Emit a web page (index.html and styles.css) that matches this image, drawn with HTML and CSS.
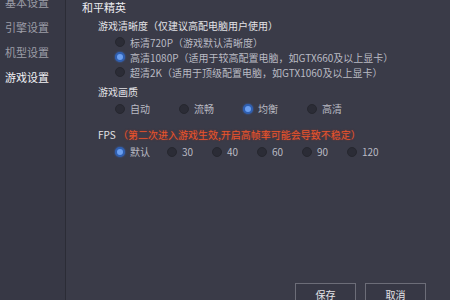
FILE: index.html
```html
<!DOCTYPE html>
<html lang="zh-CN">
<head>
    <meta charset="UTF-8">
    <meta name="viewport" content="width=device-width, initial-scale=1.0">
    <title>游戏设置</title>
    <link rel="stylesheet" href="styles.css">
</head>
<body>
    <div class="app">
        <!-- 左侧菜单 -->
        <div class="sidebar">
            <ul class="menu">
                <li>基本设置</li>
                <li>引擎设置</li>
                <li>机型设置</li>
                <li class="active">游戏设置</li>
            </ul>
        </div>

        <!-- 右侧内容 -->
        <div class="main">
            <div class="game-title">和平精英</div>

            <div class="group">
                <div class="group-label">游戏清晰度（仅建议高配电脑用户使用）</div>
                <div class="option-list">
                    <div class="option"><span class="radio"></span>标清720P（游戏默认清晰度）</div>
                    <div class="option"><span class="radio checked"></span>高清1080P（适用于较高配置电脑，如GTX660及以上显卡）</div>
                    <div class="option"><span class="radio"></span>超清2K（适用于顶级配置电脑，如GTX1060及以上显卡）</div>
                </div>
            </div>

            <div class="group">
                <div class="group-label">游戏画质</div>
                <div class="option-row">
                    <div class="option quality"><span class="radio"></span>自动</div>
                    <div class="option quality"><span class="radio"></span>流畅</div>
                    <div class="option quality"><span class="radio checked"></span>均衡</div>
                    <div class="option quality"><span class="radio"></span>高清</div>
                </div>
            </div>

            <div class="group fps">
                <div class="group-label">FPS <span class="warn">（第二次进入游戏生效,开启高帧率可能会导致不稳定）</span></div>
                <div class="option-row">
                    <div class="option fps-first"><span class="radio checked"></span>默认</div>
                    <div class="option fps-num"><span class="radio"></span>30</div>
                    <div class="option fps-num"><span class="radio"></span>40</div>
                    <div class="option fps-num"><span class="radio"></span>60</div>
                    <div class="option fps-num"><span class="radio"></span>90</div>
                    <div class="option fps-num"><span class="radio"></span>120</div>
                </div>
            </div>

            <div class="footer">
                <button class="btn">保存</button>
                <button class="btn">取消</button>
            </div>
        </div>
    </div>
</body>
</html>
```

FILE: styles.css
```css
/* Reset */
* {
    margin: 0;
    padding: 0;
    box-sizing: border-box;
}

body {
    font-family: "Noto Sans CJK SC", "Noto Sans", sans-serif;
    font-size: 10px;
    background-color: #3a3b48;
    color: #b9bac3;
    overflow: hidden;
}

.app {
    display: flex;
    height: 310px;
}

/* 左侧菜单 */
.sidebar {
    width: 66px;
    background-color: #373845;
    border-right: 1px solid #2b2c36;
    overflow: hidden;
}

.menu {
    list-style: none;
    margin-top: -10px;
}

.menu li {
    height: 25px;
    line-height: 25px;
    padding-left: 5px;
    font-size: 11px;
    color: #9c9da7;
}

.menu li.active {
    color: #f2f2f5;
}

/* 右侧内容 */
.main {
    flex: 1;
    display: flex;
    flex-direction: column;
    padding-left: 16px;
}

.game-title {
    line-height: 14px;
    font-size: 11px;
    color: #ececf0;
}

.group {
    padding-left: 16px;
    margin-top: 5px;
}

.group-label {
    line-height: 14px;
    color: #e2e2e6;
}

.warn {
    color: #e8552e;
    text-shadow: 0 0 2px rgba(200, 50, 20, 0.6);
}

.option-list {
    padding-left: 17px;
    margin-top: 1.5px;
}

.option {
    display: flex;
    align-items: center;
    line-height: 15px;
    white-space: nowrap;
}

.option-row {
    display: flex;
    padding-left: 17px;
    margin-top: 2px;
}

.option-row .option {
    line-height: 16px;
}

.option.quality {
    width: 64px;
}

.option.fps-first {
    width: 52px;
}

.option.fps-num {
    width: 45px;
}

.group.fps {
    margin-top: 11px;
}

.radio {
    width: 10px;
    height: 10px;
    border-radius: 50%;
    background-color: #2b2c36;
    border: 1px solid #26272f;
    margin-right: 5px;
    flex-shrink: 0;
}

.radio.checked {
    background-color: #6b9ff0;
    border: 2px solid #2f5fb0;
    box-shadow: 0 0 2px #3a6cc8;
}

/* 底部按钮 */
.footer {
    margin-top: auto;
    display: flex;
    justify-content: flex-end;
    gap: 9px;
    padding-right: 24px;
    padding-bottom: 5px;
}

.btn {
    width: 61px;
    height: 22px;
    background-color: #373845;
    border: 1px solid #6c6d78;
    color: #e4e4e8;
    font-family: inherit;
    font-size: 10px;
}
```
